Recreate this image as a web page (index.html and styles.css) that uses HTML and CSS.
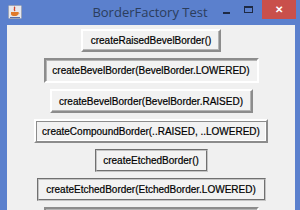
FILE: index.html
```html
<!DOCTYPE html>
<html lang="en">

<head>
    <meta charset="UTF-8">
    <meta name="viewport" content="width=device-width, initial-scale=1.0">
    <title>BorderFactory Test</title>
    <link rel="stylesheet" href="styles.css">
</head>

<body>
    <div class="window">
        <div class="titlebar">
            <svg class="app-icon" width="14" height="14" viewBox="0 0 14 14">
                <rect x="0.5" y="0.5" width="13" height="13" rx="1" fill="#e8e8ec" stroke="#9aa3b8" />
                <path d="M6 2 C8 3 5 4 7 6" stroke="#d2472a" stroke-width="1.4" fill="none" />
                <path d="M3 7 H10 V9 Q10 11 6.5 11 Q3 11 3 9 Z" fill="#e07a2a" />
                <path d="M10 7.5 Q12 8 10 9.5" stroke="#e07a2a" fill="none" />
                <rect x="2" y="12" width="10" height="1" fill="#5a6fa8" />
            </svg>
            <span class="title">BorderFactory Test</span>
            <div class="controls">
                <span class="ctl ctl-min"></span>
                <span class="ctl ctl-max"></span>
                <span class="ctl ctl-close">&#x2715;</span>
            </div>
        </div>
        <div class="content">
            <button class="btn raised h23">createRaisedBevelBorder()</button>
            <button class="btn lowered h25">createBevelBorder(BevelBorder.LOWERED)</button>
            <button class="btn raised h24">createBevelBorder(BevelBorder.RAISED)</button>
            <button class="btn compound h24">createCompoundBorder(..RAISED, ..LOWERED)</button>
            <button class="btn etched h23">createEtchedBorder()</button>
            <button class="btn etched h23">createEtchedBorder(EtchedBorder.LOWERED)</button>
            <button class="btn lowered h24">createLineBorder(Color.BLACK)</button>
        </div>
    </div>
</body>

</html>
```

FILE: styles.css
```css
* {
    margin: 0;
    padding: 0;
    box-sizing: border-box;
}

body {
    width: 300px;
    height: 210px;
    overflow: hidden;
    font-family: "Liberation Sans", Arial, sans-serif;
}

.window {
    display: flex;
    flex-direction: column;
    width: 300px;
    height: 210px;
    background-color: #5b80cd;
}

/* 标题栏 */
.titlebar {
    position: relative;
    display: flex;
    height: 25px;
    flex-shrink: 0;
    align-items: center;
    justify-content: center;
}

.app-icon {
    position: absolute;
    left: 8px;
    top: 5px;
}

.title {
    font-family: "Open Sans", "Noto Sans", sans-serif;
    font-size: 13px;
    color: #2b3d5c;
    margin-top: -1px;
}

.controls {
    position: absolute;
    right: 4px;
    top: 0;
    display: flex;
    align-items: flex-start;
}

.ctl {
    display: block;
    position: relative;
}

.ctl-min {
    width: 7px;
    height: 2px;
    margin-top: 12px;
    margin-right: 14px;
    background-color: #1e2a44;
}

.ctl-max {
    width: 9px;
    height: 7px;
    margin-top: 6px;
    margin-right: 9px;
    border: 1px solid #1e2a44;
    border-top-width: 2px;
}

.ctl-close {
    width: 34px;
    height: 19px;
    background-color: #c9504b;
    color: #fff;
    font-size: 10px;
    font-weight: bold;
    line-height: 19px;
    text-align: center;
}

/* 内容区 */
.content {
    display: flex;
    flex: 1;
    flex-direction: column;
    align-items: center;
    gap: 6px;
    margin: 0 5px 0 7px;
    padding-top: 4px;
    background-color: #f0f0f0;
    overflow: hidden;
}

.btn {
    flex-shrink: 0;
    padding: 0;
    font-family: "Liberation Sans", Arial, sans-serif;
    font-size: 10px;
    color: #000;
    background-color: #f2f2f2;
    white-space: nowrap;
    text-align: center;
    -webkit-text-stroke: 0.2px #000;
}

/* 各按钮宽度按文字长短而定 */
.btn:nth-child(1) {
    width: 140px;
}

.btn:nth-child(2) {
    width: 215px;
}

.btn:nth-child(3) {
    width: 203px;
}

.btn:nth-child(4) {
    width: 234px;
}

.btn:nth-child(5) {
    width: 113px;
}

.btn:nth-child(6) {
    width: 229px;
}

.btn:nth-child(7) {
    width: 215px;
}

.h23 {
    height: 23px;
}

.h24 {
    height: 24px;
}

.h25 {
    height: 25px;
}

/* 凸起的斜面 */
.raised {
    border: 2px solid;
    border-color: #ffffff #8c8c8c #8c8c8c #ffffff;
    box-shadow: inset -1px -1px 0 #b4b4b4;
}

/* 凹陷的斜面 */
.lowered {
    border: 2px solid;
    border-color: #8c8c8c #ffffff #ffffff #8c8c8c;
    box-shadow: inset 1px 1px 0 #b4b4b4;
}

/* 复合边框：外凸内凹 */
.compound {
    border: 2px solid;
    border-color: #ffffff #8c8c8c #8c8c8c #ffffff;
    box-shadow: inset 1px 1px 0 #8c8c8c, inset -1px -1px 0 #ffffff;
}

/* 蚀刻边框 */
.etched {
    border: 2px groove #c4c4c4;
}
```
